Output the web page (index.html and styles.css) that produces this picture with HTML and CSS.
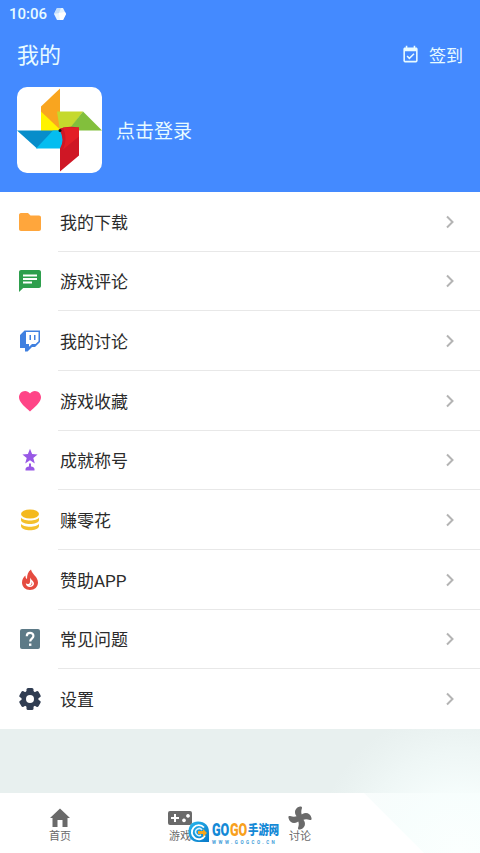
FILE: index.html
```html
<!DOCTYPE html>
<html lang="zh-CN">
<head>
    <meta charset="UTF-8">
    <meta name="viewport" content="width=device-width, initial-scale=1.0">
    <title>我的</title>
    <link rel="stylesheet" href="styles.css">
</head>
<body>
    <header class="header">
        <div class="status-bar">
            <span>10:06</span>
            <svg class="status-icon" viewBox="0 0 14 14">
                <path d="M4 1h6l3 6-3 6H4L1 7z" fill="#e6f4ff"/>
                <path d="M4 1h4L6 6 1 7z" fill="#c3defb"/>
                <path d="M6 6l6-1 1 2-3 6H7z" fill="#fff"/>
            </svg>
        </div>
        <div class="title-bar">
            <h1>我的</h1>
            <a class="sign-in" href="#">
                <svg viewBox="0 0 24 24"><path fill="currentColor" d="M19 3h-1V1h-2v2H8V1H6v2H5c-1.100 0-2 .9-2 2v15c0 1.100.9 2 2 2h14c1.100 0 2-.9 2-2V5c0-1.100-.9-2-2-2zm0 17H5V8h14v12zm-8.400-1.800l6.500-6.500-1.300-1.300-5.200 5.200-2.300-2.300L7 14.600z"/></svg>
                <span>签到</span>
            </a>
        </div>
        <div class="user">
            <svg class="avatar" viewBox="0 0 85 85">
                <path d="M43 1v42L24 27V19z" fill="#f9a51f"/>
                <path d="M24 24l19 18-8 4-11-1z" fill="#fff200"/>
                <path d="M40 24h26L52 43h-9z" fill="#c5d92d"/>
                <path d="M66 24l19 19H51z" fill="#82bf3c"/>
                <path d="M0 43h42L20 61z" fill="#078dca"/>
                <path d="M36 43h10v18H19z" fill="#04bdf0"/>
                <path d="M43 41q8-3 19-1v28L43 84V61q5-8 0-18z" fill="#cf1725"/>
                <path d="M46 62q5-11 0-22h16v9z" fill="#e31e26"/>
                <circle cx="43" cy="43" r="1.500" fill="#111"/>
            </svg>
            <span class="user-name">点击登录</span>
        </div>
    </header>

    <main class="menu">
        <a class="menu-item" href="#">
            <svg class="icon" viewBox="0 0 24 24"><path fill="#ffa63c" d="M10 3H3C1.600 3 1 4 1 5v14c0 1.200.8 2 2 2h18c1.200 0 2-.8 2-2V7.500c0-1.200-.8-2-2-2h-8.500z"/></svg>
            <span class="label">我的下载</span>
            <svg class="arrow" viewBox="0 0 10 14"><path d="M2 1.500L7.500 7 2 12.500"/></svg>
        </a>
        <a class="menu-item" href="#">
            <svg class="icon" viewBox="0 0 24 24"><path fill="#2e9f4d" d="M21 1H3C1.900 1 1 1.900 1 3v20l4.200-4H21c1.100 0 2-.9 2-2V3c0-1.100-.9-2-2-2zM5 5.500h14v2H5v-2zm9 9H5v-2h9v2zM19 11H5V9h14v2z"/></svg>
            <span class="label">游戏评论</span>
            <svg class="arrow" viewBox="0 0 10 14"><path d="M2 1.500L7.500 7 2 12.500"/></svg>
        </a>
        <a class="menu-item" href="#">
            <svg class="icon" viewBox="0 0 24 24">
                <path fill="#4080e0" d="M6.500 1.500H22v11.500L17 18h-3l-4.500 4.500H7V19H2V6z"/>
                <path fill="#fff" d="M8 3h12.500v9.300L17.500 15H14l-3 2.800V15H8z"/>
                <path fill="#4080e0" d="M11.500 6h1.500v5h-1.500zM16 6h1.500v5H16z"/>
            </svg>
            <span class="label">我的讨论</span>
            <svg class="arrow" viewBox="0 0 10 14"><path d="M2 1.500L7.500 7 2 12.500"/></svg>
        </a>
        <a class="menu-item" href="#">
            <svg class="icon" viewBox="0 0 24 24"><path fill="#ff4587" d="M12 22.500l-1.600-1.400C4.800 16 1 12.600 1 8.300 1 4.900 3.700 2 7.100 2 9 2 10.800 3 12 4.500 13.200 3 15 2 16.900 2 20.300 2 23 4.900 23 8.300c0 4.300-3.800 7.700-9.400 12.800z"/></svg>
            <span class="label">游戏收藏</span>
            <svg class="arrow" viewBox="0 0 10 14"><path d="M2 1.500L7.500 7 2 12.500"/></svg>
        </a>
        <a class="menu-item" href="#">
            <svg class="icon" viewBox="0 0 24 24"><path fill="#9858e6" d="M12 .8l2.100 5.300 5.500.3-4.300 3.500 1.500 5.500-4.800-3.100-4.800 3.100 1.500-5.500-4.300-3.500 5.500-.3zM11 15.500h2v3c2 .2 3.200 1 3.500 2.500v1.500h-9V21c.3-1.500 1.500-2.300 3.500-2.500z"/></svg>
            <span class="label">成就称号</span>
            <svg class="arrow" viewBox="0 0 10 14"><path d="M2 1.500L7.500 7 2 12.500"/></svg>
        </a>
        <a class="menu-item" href="#">
            <svg class="icon" viewBox="0 0 24 24">
                <ellipse cx="12" cy="6" rx="9" ry="4.500" fill="#f4b91d"/>
                <path fill="#f4c02c" d="M3 9.500c2 4 16 4 18 0v2.700c-1 5-17 5-18 0zM3 15.700c2 4 16 4 18 0v2.500c-1 5.500-17 5.500-18 0z"/>
            </svg>
            <span class="label">赚零花</span>
            <svg class="arrow" viewBox="0 0 10 14"><path d="M2 1.500L7.500 7 2 12.500"/></svg>
        </a>
        <a class="menu-item" href="#">
            <svg class="icon" viewBox="0 0 24 24">
                <path fill="#e54b40" d="M13 1.500c1 5 7 7 7 13 0 4.500-3.500 7.500-8 7.500s-8-3-8-7.500c0-3 1.500-5.500 3.500-7 0 2 .2 3 1.500 3.500C9 7 10 3.500 13 1.500z"/>
                <path fill="#fff" d="M12.500 9.500c.3 2.500 3.500 3.700 3.500 6 0 2.200-1.800 3.500-4 3.500-2.400 0-4.200-1.500-4.200-3.700 1.200 1 2.500 1 3.600.2 1.300-1.300.2-3.500 1.100-6z"/>
                <path fill="#e54b40" d="M13.500 14c.7 2.200-.7 3.700-2.700 3.700 2.600.6 4.700-1.500 2.700-3.700z"/>
            </svg>
            <span class="label">赞助APP</span>
            <svg class="arrow" viewBox="0 0 10 14"><path d="M2 1.500L7.500 7 2 12.500"/></svg>
        </a>
        <a class="menu-item" href="#">
            <svg class="icon" viewBox="0 0 24 24">
                <rect x="2" y="2" width="20" height="20" rx="2" fill="#5d7a87"/>
                <path d="M8.800 9.200c0-4.400 6.600-4.200 6.600-.3 0 2.600-3.200 2.800-3.200 5.600" fill="none" stroke="#fff" stroke-width="2.200"/>
                <path d="M11 16.500h2.400v2.400H11z" fill="#fff"/>
            </svg>
            <span class="label">常见问题</span>
            <svg class="arrow" viewBox="0 0 10 14"><path d="M2 1.500L7.500 7 2 12.500"/></svg>
        </a>
        <a class="menu-item" href="#">
            <svg class="icon" viewBox="0 0 24 24">
                <g fill="#303d52">
                    <rect x="8.500" y="1" width="7" height="22" rx="1.500"/>
                    <rect x="8.500" y="1" width="7" height="22" rx="1.500" transform="rotate(60 12 12)"/>
                    <rect x="8.500" y="1" width="7" height="22" rx="1.500" transform="rotate(120 12 12)"/>
                    <circle cx="12" cy="12" r="8.500"/>
                </g>
                <circle cx="12" cy="12" r="4" fill="#fff"/>
            </svg>
            <span class="label">设置</span>
            <svg class="arrow" viewBox="0 0 10 14"><path d="M2 1.500L7.500 7 2 12.500"/></svg>
        </a>
    </main>

    <nav class="tab-bar">
        <a class="tab" href="#">
            <svg viewBox="0 0 24 24"><path fill="currentColor" d="M9.500 21v-7h5v7h5v-9H22L12 2.500 2 12h2.500v9z"/></svg>
            <span>首页</span>
        </a>
        <a class="tab" href="#">
            <svg viewBox="0 0 24 24"><path fill="currentColor" fill-rule="evenodd" d="M2 5h20a2 2 0 0 1 2 2v10a2 2 0 0 1-2 2H2a2 2 0 0 1-2-2V7a2 2 0 0 1 2-2zm4 3v3H3v2h3v3h2v-3h3v-2H8V8zM16 12.500a1.900 1.900 0 1 0 .01 0zM20 8a1.900 1.900 0 1 0 .01 0z"/></svg>
            <span>游戏</span>
        </a>
        <a class="tab" href="#">
            <svg viewBox="0 0 24 24">
                <g fill="currentColor">
                    <path id="blade" d="M11 12C6 10 5 2 12 .5c2-.4 2 .5 2 1.500-1 3-1 5 0 7l-1 3z"/>
                    <use href="#blade" transform="rotate(90 12 12)"/>
                    <use href="#blade" transform="rotate(180 12 12)"/>
                    <use href="#blade" transform="rotate(270 12 12)"/>
                </g>
            </svg>
            <span>讨论</span>
        </a>
    </nav>

    <!-- pale glow over the bottom right corner -->
    <svg class="glow" viewBox="0 0 170 124">
        <defs>
            <radialGradient id="fade" gradientUnits="userSpaceOnUse" cx="150" cy="124" r="145">
                <stop offset="0" stop-color="#fbfffe"/>
                <stop offset="0.4" stop-color="#f7fefd" stop-opacity="0.95"/>
                <stop offset="0.7" stop-color="#f3fbfa" stop-opacity="0.6"/>
                <stop offset="1" stop-color="#f0f8f7" stop-opacity="0"/>
            </radialGradient>
        </defs>
        <path d="M0 0h170v124h-56L54 64H0z" fill="url(#fade)"/>
    </svg>

    <div class="watermark">
        <svg viewBox="0 0 22 22">
            <defs>
                <linearGradient id="mark" x1="0" y1="0" x2="1" y2="1">
                    <stop offset="0" stop-color="#28b8ee"/>
                    <stop offset="1" stop-color="#0878c8"/>
                </linearGradient>
            </defs>
            <path d="M10 .5c7 0 11 4 11 11V21H10C4 21 .5 17 .5 10.800S4 .5 10 .5z" fill="url(#mark)"/>
            <path d="M16 6.500a7 7 0 1 0 1 8" fill="none" stroke="#fff" stroke-width="1.800"/>
            <path d="M14 9a3.500 3.500 0 1 0-1 5" fill="none" stroke="#d8f2ff" stroke-width="1.500"/>
            <path d="M10 10h5V8l4 4-4 4v-3h-5z" fill="#f8a51b"/>
        </svg>
        <div class="watermark-text">
            <div class="watermark-name"><b>GO</b><b class="orange">GO</b><span>手游网</span></div>
            <div class="watermark-url">WWW.GOGCO.CN</div>
        </div>
    </div>
</body>
</html>
```
FILE: styles.css
```css
* {
    margin: 0;
    padding: 0;
    box-sizing: border-box;
}

body {
    position: relative;
    height: 853px;
    display: flex;
    flex-direction: column;
    overflow: hidden;
    background-color: #e8f0ef;
    color: #2b2b2b;
    font-family: Roboto, "Noto Sans CJK SC", sans-serif;
}

a {
    color: inherit;
    text-decoration: none;
}

svg {
    display: block;
    flex-shrink: 0;
}

/* Header */
.header {
    height: 192px;
    background-color: #448aff;
    color: #e8fbff;
}

.status-bar {
    display: flex;
    align-items: center;
    gap: 6px;
    height: 27px;
    padding-left: 9px;
    font-size: 15px;
    font-weight: 500;
}

.status-icon {
    width: 14px;
    height: 14px;
}

.title-bar {
    display: flex;
    justify-content: space-between;
    align-items: center;
    height: 56px;
    padding: 0 17px 1px;
}

.title-bar h1 {
    padding-bottom: 3px;
    font-size: 22px;
    font-weight: 400;
}

.sign-in {
    display: flex;
    align-items: center;
    gap: 9px;
    font-size: 17px;
}

.sign-in svg {
    width: 19px;
    height: 19px;
}

.user {
    display: flex;
    align-items: center;
    gap: 14px;
    padding: 4px 17px 0;
}

.avatar {
    width: 85px;
    height: 86px;
    background-color: #fff;
    border-radius: 10px;
}

.user-name {
    padding-bottom: 2px;
    font-size: 19px;
}

/* Menu list */
.menu {
    display: grid;
    grid-template-rows: repeat(9, 1fr);
    height: 537px;
    background-color: #fff;
}

.menu-item {
    position: relative;
    display: flex;
    align-items: center;
    padding: 0 25px 0 18px;
    font-size: 17px;
}

/* divider starts next to the label, not at the screen edge */
.menu-item:not(:last-child)::after {
    content: "";
    position: absolute;
    left: 58px;
    right: 0;
    bottom: 0;
    height: 1px;
    background-color: #e8e8e8;
}

.icon {
    width: 24px;
    height: 24px;
    margin-right: 18px;
}

.label {
    flex: 1;
    padding-bottom: 1px;
}

.arrow {
    width: 10px;
    height: 14px;
    fill: none;
    stroke: #b4b4b4;
    stroke-width: 2;
}

/* Bottom tabs */
.tab-bar {
    display: grid;
    grid-template-columns: repeat(4, 1fr);
    height: 60px;
    margin-top: auto;
    background-color: #fff;
    color: #6a6a6a;
}

.tab {
    display: flex;
    flex-direction: column;
    align-items: center;
    padding-top: 13px;
    font-size: 11px;
    line-height: 14px;
}

.tab svg {
    width: 24px;
    height: 24px;
}

.glow {
    position: absolute;
    right: 0;
    bottom: 0;
    width: 170px;
    height: 124px;
}

.watermark {
    position: absolute;
    left: 188px;
    top: 821px;
    display: flex;
    gap: 2px;
}

.watermark svg {
    width: 22px;
    height: 22px;
}

.watermark-name {
    display: flex;
    align-items: center;
    height: 18px;
    color: #1489d6;
    font-size: 13px;
    font-weight: 900;
    line-height: 18px;
}

.watermark-name b {
    width: 18px;
    font-size: 18px;
    font-weight: 900;
    line-height: 16px;
    transform: scaleX(0.7);
    transform-origin: left;
}

.watermark-name .orange {
    color: #f8a01c;
}

.watermark-name span {
    width: 31px;
    white-space: nowrap;
    transform: scaleX(0.8);
    transform-origin: left;
}

.watermark-url {
    padding-top: 1px;
    color: #3d9bd8;
    font-size: 4.5px;
    font-weight: 700;
    line-height: 5px;
    letter-spacing: 2.5px;
    white-space: nowrap;
}
```
